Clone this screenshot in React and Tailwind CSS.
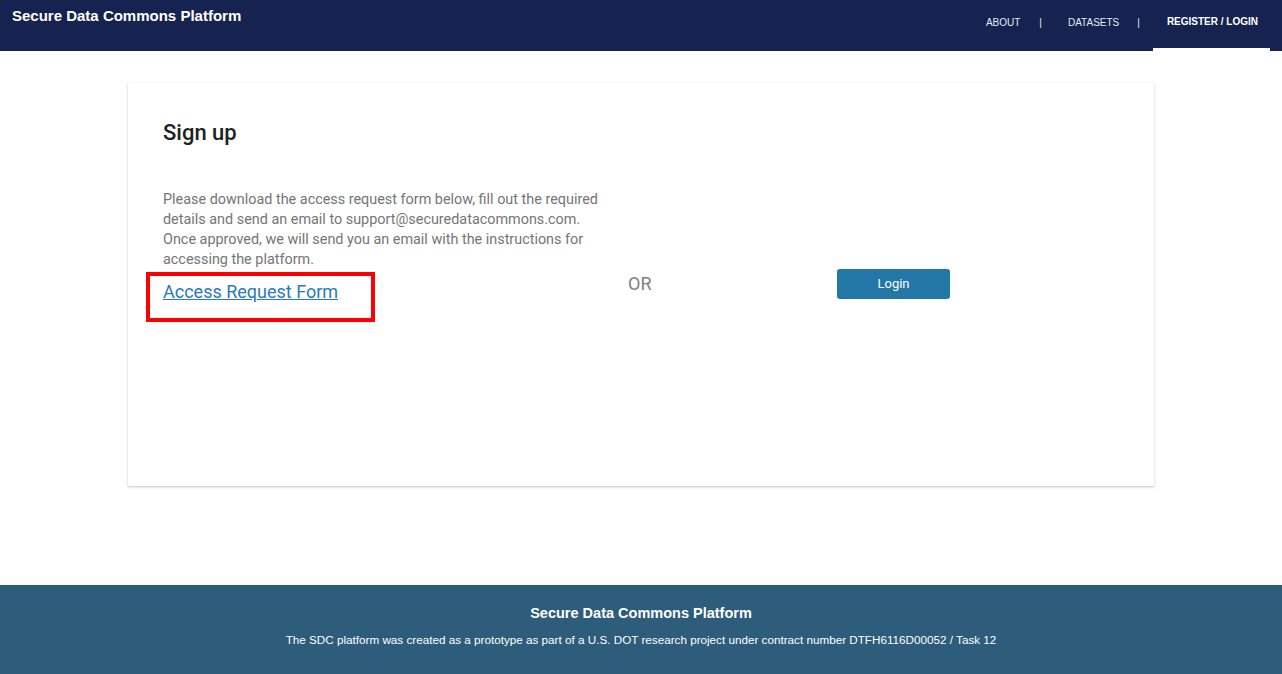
export default function App() {
    return (
        <div className="min-h-[674px] flex flex-col bg-white font-['Roboto',sans-serif]">
            <header className="h-[51px] bg-[#16224f] flex items-start justify-between">
                <div className="pl-3 pt-[5px] text-[15px] font-bold text-white font-['Liberation_Sans',sans-serif]">
                    Secure Data Commons Platform
                </div>
                <nav className="flex items-stretch h-full pr-3 text-[10px] text-[#e8ecf5] font-['Liberation_Sans',sans-serif]">
                    <a className="flex items-center pl-[15px] pb-[6px]">ABOUT</a>
                    <span className="flex items-center pl-[19px] pr-[26px] pb-[6px]">|</span>
                    <a className="flex items-center pb-[6px]">DATASETS</a>
                    <span className="flex items-center pl-[18px] pr-[13px] pb-[6px]">|</span>
                    <a className="flex items-center pl-[14px] pr-[12px] pb-[6px] font-bold text-white border-b-[3px] border-white">
                        REGISTER / LOGIN
                    </a>
                </nav>
            </header>

            <main className="flex-1 pt-[32px] pb-[98px]">
                <div className="mx-auto w-[1026px] h-[403px] bg-white shadow-[0_1px_3px_rgba(0,0,0,0.18),0_1px_1px_rgba(0,0,0,0.06)] px-[35px] pt-[39px]">
                    <h2 className="text-[22px] font-medium text-[#212121] leading-none">Sign up</h2>
                    <div className="flex items-start mt-[46px]">
                        <div className="w-[445px]">
                            <p className="text-[14.4px] leading-[20px] text-[#757575]">
                                Please download the access request form below, fill out the required details and send an email to support@securedatacommons.com. Once approved, we will send you an email with the instructions for accessing the platform.
                            </p>
                            <div className="-ml-[17px] mt-[2px] w-[229px] h-[50px] border-4 border-[#ff0000] pl-[13px] pt-[4px]">
                                <a className="text-[18px] leading-[24px] text-[#2a7ab9] underline">Access Request Form</a>
                            </div>
                        </div>
                        <div className="w-[171px] pt-[80px] pl-[20px] text-[18px] text-[#808080]">OR</div>
                        <div className="pt-[79px] pl-[58px]">
                            <button className="w-[113px] h-[30px] rounded-[3px] bg-[#2277a7] text-white text-[13px]">
                                Login
                            </button>
                        </div>
                    </div>
                </div>
            </main>

            <footer className="h-[89px] bg-[#2e5c7b] text-white text-center pt-[18px]">
                <div className="text-[14.5px] font-bold font-['Liberation_Sans',sans-serif]">
                    Secure Data Commons Platform
                </div>
                <div className="mt-[6px] text-[11.7px] font-['Liberation_Sans',sans-serif]">
                    The SDC platform was created as a prototype as part of a U.S. DOT research project under contract number DTFH6116D00052 / Task 12
                </div>
            </footer>
        </div>
    )
}
